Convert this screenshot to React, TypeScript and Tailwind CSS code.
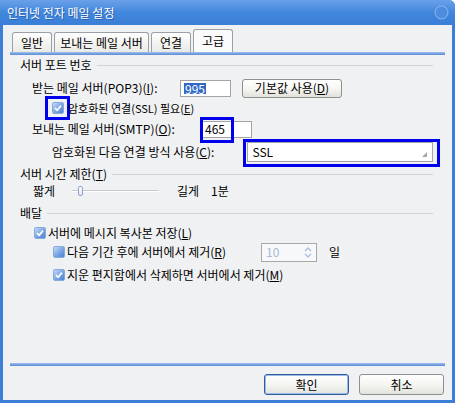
import type { ReactNode } from "react"

const Check = ({ checked }: { checked: boolean }) => (
    <span className="flex h-[12px] w-[12px] shrink-0 items-center justify-center rounded-[2px] border border-[#86a9dc] bg-gradient-to-br from-[#c9dbf6] via-[#7ea8e6] to-[#4c82d4]">
        {checked && (
            <svg width="8" height="8" viewBox="0 0 8 8">
                <path d="M1 4.2 L3.1 6.3 L7 1.6" stroke="white" strokeWidth="1.7" fill="none" />
            </svg>
        )}
    </span>
)

const Group = ({ children, className = "" }: { children: ReactNode; className?: string }) => (
    <div className={`flex h-[20px] items-center gap-[5px] ${className}`}>
        <span>{children}</span>
        <span className="flex-1 border-t border-[#d2d2d2]" />
    </div>
)

const Mark = () => <span className="pointer-events-none absolute border-[3px] border-[#0000ee]" />

const TABS = [
    { label: "일반", w: "w-[40px]" },
    { label: "보내는 메일 서버", w: "w-[95px]" },
    { label: "연결", w: "w-[40px]" },
]

const BlueLine = () => (
    <div className="ml-[7px] h-[3px] w-[435px] bg-gradient-to-b from-[#a5c1ec] via-[#7aa3e2] to-[#5b8bd6]" />
)

export default function App() {
    return (
        <div className="flex h-[403px] w-[455px] flex-col overflow-hidden rounded-tr-[6px] bg-[#3b7fd8] font-['Noto_Sans_CJK_KR','Noto_Sans',sans-serif] text-[12px] leading-[14px] text-black">
            {/* title bar */}
            <div className="flex h-[25px] shrink-0 items-center justify-between bg-gradient-to-b from-[#6aa1e9] via-[#4187dc] to-[#3a7ed7] pl-[7px] pr-[6px]">
                <span className="text-[12px] text-white [text-shadow:1px_1px_0_#2a5fae]">인터넷 전자 메일 설정</span>
                <svg width="15" height="15" viewBox="0 0 15 15">
                    <circle cx="7.5" cy="7.5" r="6.5" fill="#4d8de0" stroke="#8db6ee" strokeWidth="1" />
                </svg>
            </div>

            <div className="mx-[3px] mb-[3px] flex flex-1 flex-col bg-[#f0f1f3]">
                {/* tabs */}
                <div className="flex h-[27px] items-end gap-[2px] pl-[9px]">
                    {TABS.map(({ label, w }) => (
                        <div
                            key={label}
                            className={`flex h-[20px] ${w} items-center justify-center rounded-t-[3px] border border-b-0 border-[#9aa0a6] bg-gradient-to-b from-white to-[#e9e9e5] whitespace-nowrap`}
                        >
                            {label}
                        </div>
                    ))}
                    <div className="flex h-[23px] w-[40px] items-start justify-center rounded-t-[3px] border border-b-0 border-[#9aa0a6] bg-[#fafafb] pt-[4px]">
                        고급
                    </div>
                </div>
                <BlueLine />

                {/* panel */}
                <div className="flex h-[308px] flex-col pl-[17px]">
                    <div className="w-[413px]">
                        <Group>서버 포트 번호</Group>

                        <div className="mt-[2px] flex h-[22px] items-center">
                            <span className="w-[160px] pl-[12px] whitespace-nowrap">
                                받는 메일 서버(POP3)(<u>I</u>):
                            </span>
                            <div className="flex h-[17px] w-[51px] items-center border border-[#a4a4a4] bg-white pl-[3px]">
                                <span className="bg-[#316ac5] px-[1px] leading-[11px] text-white">995</span>
                            </div>
                            <button className="ml-[11px] flex h-[19px] w-[100px] items-center justify-center rounded-[3px] border border-[#8e8f8f] bg-gradient-to-b from-white via-[#f6f6f3] to-[#e2e2dc]">
                                기본값 사용(<u>D</u>)
                            </button>
                        </div>

                        <div className="flex h-[18px] items-center pl-[32px]">
                            <span className="relative flex">
                                <Check checked />
                                <span className="pointer-events-none absolute left-[-7px] top-[-6px] h-[24px] w-[25px] border-[3px] border-[#0000ee]" />
                            </span>
                            <span className="relative ml-[4px] text-[11px] whitespace-nowrap">
                                암호화된 연결(SSL) 필요(<u>E</u>)
                            </span>
                        </div>

                        <div className="mt-[1px] flex h-[22px] items-center">
                            <span className="w-[181px] pl-[12px] whitespace-nowrap">
                                보내는 메일 서버(SMTP)(<u>O</u>):
                            </span>
                            <div className="relative flex h-[17px] w-[51px] items-center border border-[#a4a4a4] bg-white pl-[3px]">
                                465
                                <span className="pointer-events-none absolute left-[-2px] top-[-5px] h-[26px] w-[34px] border-[3px] border-[#0000ee]" />
                            </div>
                        </div>

                        <div className="mt-[1px] flex h-[22px] items-center">
                            <span className="w-[228px] pl-[32px] whitespace-nowrap">
                                암호화된 다음 연결 방식 사용(<u>C</u>):
                            </span>
                            <div className="relative flex h-[20px] w-[186px] items-center border border-[#a4a4a4] bg-white pl-[4px]">
                                SSL
                                <svg className="absolute bottom-[4px] right-[5px]" width="5" height="5" viewBox="0 0 5 5">
                                    <polygon points="5,0 5,5 0,5" fill="#a8a8a8" />
                                </svg>
                                <span className="pointer-events-none absolute left-[-5px] top-[-4px] h-[28px] w-[197px] border-[3px] border-[#0000ee]" />
                            </div>
                        </div>

                        <Group className="mt-[1px]">
                            서버 시간 제한(<u>T</u>)
                        </Group>

                        <div className="flex h-[14px] items-center pl-[13px]">
                            <span className="w-[39px]">짧게</span>
                            <div className="relative h-[14px] w-[87px]">
                                <div className="absolute left-0 right-0 top-[6px] h-[2px] border-t border-[#c7c9cc] bg-white" />
                                <div className="absolute left-[6px] top-[2px] h-[10px] w-[5px] rounded-[2px] border border-[#8ea5c8] bg-gradient-to-b from-white to-[#dfe6f1]" />
                            </div>
                            <span className="ml-[18px]">길게</span>
                            <span className="ml-[12px]">1분</span>
                        </div>

                        <Group className="mt-[5px]">배달</Group>

                        <div className="mt-[1px] flex h-[18px] items-center pl-[14px]">
                            <Check checked />
                            <span className="ml-[2px] whitespace-nowrap">
                                서버에 메시지 복사본 저장(<u>L</u>)
                            </span>
                        </div>

                        <div className="flex h-[20px] items-center pl-[33px]">
                            <Check checked={false} />
                            <span className="ml-[2px] w-[194px] whitespace-nowrap">
                                다음 기간 후에 서버에서 제거(<u>R</u>)
                            </span>
                            <div className="flex h-[19px] w-[56px] items-center justify-between border border-[#a8a8a8] bg-[#f7f8fa] pl-[4px] pr-[4px] text-[#a9bbd4]">
                                10
                                <svg width="8" height="13" viewBox="0 0 8 13">
                                    <path d="M1 5 L4 2 L7 5 M1 8 L4 11 L7 8" stroke="#a9c0de" strokeWidth="1.4" fill="none" />
                                </svg>
                            </div>
                            <span className="ml-[12px]">일</span>
                        </div>

                        <div className="mt-[4px] flex h-[18px] items-center pl-[33px]">
                            <Check checked />
                            <span className="ml-[2px] whitespace-nowrap">
                                지운 편지함에서 삭제하면 서버에서 제거(<u>M</u>)
                            </span>
                        </div>
                    </div>
                </div>
                <BlueLine />

                {/* buttons */}
                <div className="mt-[8px] flex h-[21px] justify-end gap-[10px] pr-[8px]">
                    <button className="flex h-[21px] w-[85px] items-center justify-center rounded-[3px] border border-[#2f5c9a] bg-gradient-to-b from-white via-[#f5f5f2] to-[#e3e3dd] shadow-[inset_0_0_0_1px_#9dbbe8]">
                        확인
                    </button>
                    <button className="flex h-[21px] w-[85px] items-center justify-center rounded-[3px] border border-[#8e8f8f] bg-gradient-to-b from-white via-[#f5f5f2] to-[#e3e3dd]">
                        취소
                    </button>
                </div>
            </div>
        </div>
    )
}
